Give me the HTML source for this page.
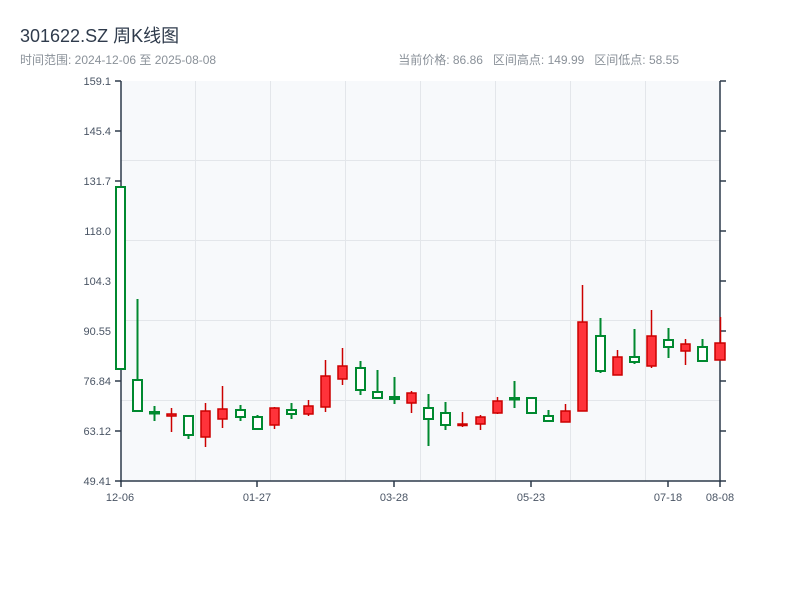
<!DOCTYPE html>
<html><head><meta charset="utf-8"><style>
body{margin:0;width:800px;height:600px;background:#fff;overflow:hidden;font-family:"Liberation Sans","Noto Sans CJK SC",sans-serif}
.t{position:absolute;left:20px;top:22px;font-size:18px;color:#2f3b4c}
.s{position:absolute;top:51px;font-size:12px;color:#8a9199}
</style></head><body>
<div class="t">301622.SZ 周K线图</div>
<div class="s" style="left:20px">时间范围: 2024-12-06 至 2025-08-08</div>
<div class="s" style="right:121px">当前价格: 86.86&nbsp;&nbsp;&nbsp;区间高点: 149.99&nbsp;&nbsp;&nbsp;区间低点: 58.55</div>
<svg width="800" height="600" style="position:absolute;left:0;top:0" font-family="Liberation Sans, sans-serif">
<rect x="121" y="81" width="599" height="400" fill="#f7f9fb"/>
<g stroke="#e3e6ea" stroke-width="1">
<line x1="121" y1="160.5" x2="720" y2="160.5"/><line x1="121" y1="240.5" x2="720" y2="240.5"/><line x1="121" y1="320.5" x2="720" y2="320.5"/><line x1="121" y1="400.5" x2="720" y2="400.5"/>
<line x1="195.5" y1="81" x2="195.5" y2="481"/><line x1="270.5" y1="81" x2="270.5" y2="481"/><line x1="345.5" y1="81" x2="345.5" y2="481"/><line x1="420.5" y1="81" x2="420.5" y2="481"/><line x1="495.5" y1="81" x2="495.5" y2="481"/><line x1="570.5" y1="81" x2="570.5" y2="481"/><line x1="645.5" y1="81" x2="645.5" y2="481"/>
</g>
<g stroke="#2d3a4b" stroke-width="1.5">
<line x1="121" y1="81" x2="121" y2="482"/><line x1="120" y1="481" x2="721" y2="481"/><line x1="720" y1="81" x2="720" y2="482"/>
<line x1="115" y1="81" x2="121" y2="81"/><line x1="115" y1="131" x2="121" y2="131"/><line x1="115" y1="181" x2="121" y2="181"/><line x1="115" y1="231" x2="121" y2="231"/><line x1="115" y1="281" x2="121" y2="281"/><line x1="115" y1="331" x2="121" y2="331"/><line x1="115" y1="381" x2="121" y2="381"/><line x1="115" y1="431" x2="121" y2="431"/><line x1="115" y1="481" x2="121" y2="481"/>
<line x1="720" y1="81" x2="726" y2="81"/><line x1="720" y1="131" x2="726" y2="131"/><line x1="720" y1="181" x2="726" y2="181"/><line x1="720" y1="231" x2="726" y2="231"/><line x1="720" y1="281" x2="726" y2="281"/><line x1="720" y1="331" x2="726" y2="331"/><line x1="720" y1="381" x2="726" y2="381"/><line x1="720" y1="431" x2="726" y2="431"/><line x1="720" y1="481" x2="726" y2="481"/>
<line x1="121" y1="481" x2="121" y2="487"/><line x1="257" y1="481" x2="257" y2="487"/><line x1="394" y1="481" x2="394" y2="487"/><line x1="531" y1="481" x2="531" y2="487"/><line x1="668" y1="481" x2="668" y2="487"/><line x1="720" y1="481" x2="720" y2="487"/>
</g>
<g font-size="11" fill="#4a5565" text-anchor="end">
<text x="111" y="85">159.1</text><text x="111" y="135">145.4</text><text x="111" y="185">131.7</text><text x="111" y="235">118.0</text><text x="111" y="285">104.3</text><text x="111" y="335">90.55</text><text x="111" y="385">76.84</text><text x="111" y="435">63.12</text><text x="111" y="485">49.41</text>
</g>
<g font-size="11" fill="#4a5565" text-anchor="middle">
<text x="120" y="501">12-06</text><text x="257" y="501">01-27</text><text x="394" y="501">03-28</text><text x="531" y="501">05-23</text><text x="668" y="501">07-18</text><text x="720" y="501">08-08</text>
</g>
<g stroke="#00892f" stroke-width="2" fill="#fff">
<rect x="116" y="187" width="9" height="182"/>
<line x1="137.5" y1="299" x2="137.5" y2="412"/><rect x="133" y="380" width="9" height="31"/>
<line x1="154.5" y1="406" x2="154.5" y2="421"/><rect x="150" y="412" width="9" height="1.5"/>
<line x1="188.5" y1="415" x2="188.5" y2="439"/><rect x="184" y="416" width="9" height="19"/>
<line x1="240.5" y1="405" x2="240.5" y2="421"/><rect x="236" y="410" width="9" height="7"/>
<line x1="257.5" y1="415" x2="257.5" y2="429"/><rect x="253" y="417" width="9" height="12"/>
<line x1="291.5" y1="403" x2="291.5" y2="419"/><rect x="287" y="410" width="9" height="4"/>
<line x1="360.5" y1="361" x2="360.5" y2="395"/><rect x="356" y="368" width="9" height="22"/>
<line x1="377.5" y1="370" x2="377.5" y2="398"/><rect x="373" y="392" width="9" height="6"/>
<line x1="394.5" y1="377" x2="394.5" y2="404"/><rect x="390" y="397" width="9" height="2"/>
<line x1="428.5" y1="394" x2="428.5" y2="446"/><rect x="424" y="408" width="9" height="11"/>
<line x1="445.5" y1="402" x2="445.5" y2="430"/><rect x="441" y="413" width="9" height="12"/>
<line x1="514.5" y1="381" x2="514.5" y2="408"/><rect x="510" y="398" width="9" height="1.5"/>
<rect x="527" y="398" width="9" height="15"/>
<line x1="548.5" y1="410" x2="548.5" y2="421"/><rect x="544" y="416" width="9" height="5"/>
<line x1="600.5" y1="318" x2="600.5" y2="373"/><rect x="596" y="336" width="9" height="35"/>
<line x1="634.5" y1="329" x2="634.5" y2="364"/><rect x="630" y="357" width="9" height="5"/>
<line x1="668.5" y1="328" x2="668.5" y2="358"/><rect x="664" y="340" width="9" height="7"/>
<line x1="702.5" y1="339" x2="702.5" y2="362"/><rect x="698" y="347" width="9" height="14"/>
</g>
<g stroke="#cc0000" stroke-width="1.5" fill="#ff333a">
<line x1="171.5" y1="408" x2="171.5" y2="432"/><rect x="167" y="414" width="9" height="2"/>
<line x1="205.5" y1="403" x2="205.5" y2="447"/><rect x="201" y="411" width="9" height="26"/>
<line x1="222.5" y1="386" x2="222.5" y2="428"/><rect x="218" y="409" width="9" height="10"/>
<line x1="274.5" y1="407" x2="274.5" y2="429"/><rect x="270" y="408" width="9" height="17"/>
<line x1="308.5" y1="400" x2="308.5" y2="416"/><rect x="304" y="406" width="9" height="8"/>
<line x1="325.5" y1="360" x2="325.5" y2="412"/><rect x="321" y="376" width="9" height="31"/>
<line x1="342.5" y1="348" x2="342.5" y2="385"/><rect x="338" y="366" width="9" height="13"/>
<line x1="411.5" y1="391" x2="411.5" y2="413"/><rect x="407" y="393" width="9" height="10"/>
<line x1="462.5" y1="412" x2="462.5" y2="427"/><rect x="458" y="424" width="9" height="1.5"/>
<line x1="480.5" y1="415" x2="480.5" y2="430"/><rect x="476" y="417" width="9" height="7"/>
<line x1="497.5" y1="397" x2="497.5" y2="414"/><rect x="493" y="401" width="9" height="12"/>
<line x1="565.5" y1="404" x2="565.5" y2="422"/><rect x="561" y="411" width="9" height="11"/>
<line x1="582.5" y1="285" x2="582.5" y2="411"/><rect x="578" y="322" width="9" height="89"/>
<line x1="617.5" y1="350" x2="617.5" y2="375"/><rect x="613" y="357" width="9" height="18"/>
<line x1="651.5" y1="310" x2="651.5" y2="368"/><rect x="647" y="336" width="9" height="30"/>
<line x1="685.5" y1="339" x2="685.5" y2="365"/><rect x="681" y="344" width="9" height="7"/>
<line x1="720.5" y1="317" x2="720.5" y2="360"/><rect x="715" y="343" width="10" height="17"/>
</g>
</svg>
</body></html>
